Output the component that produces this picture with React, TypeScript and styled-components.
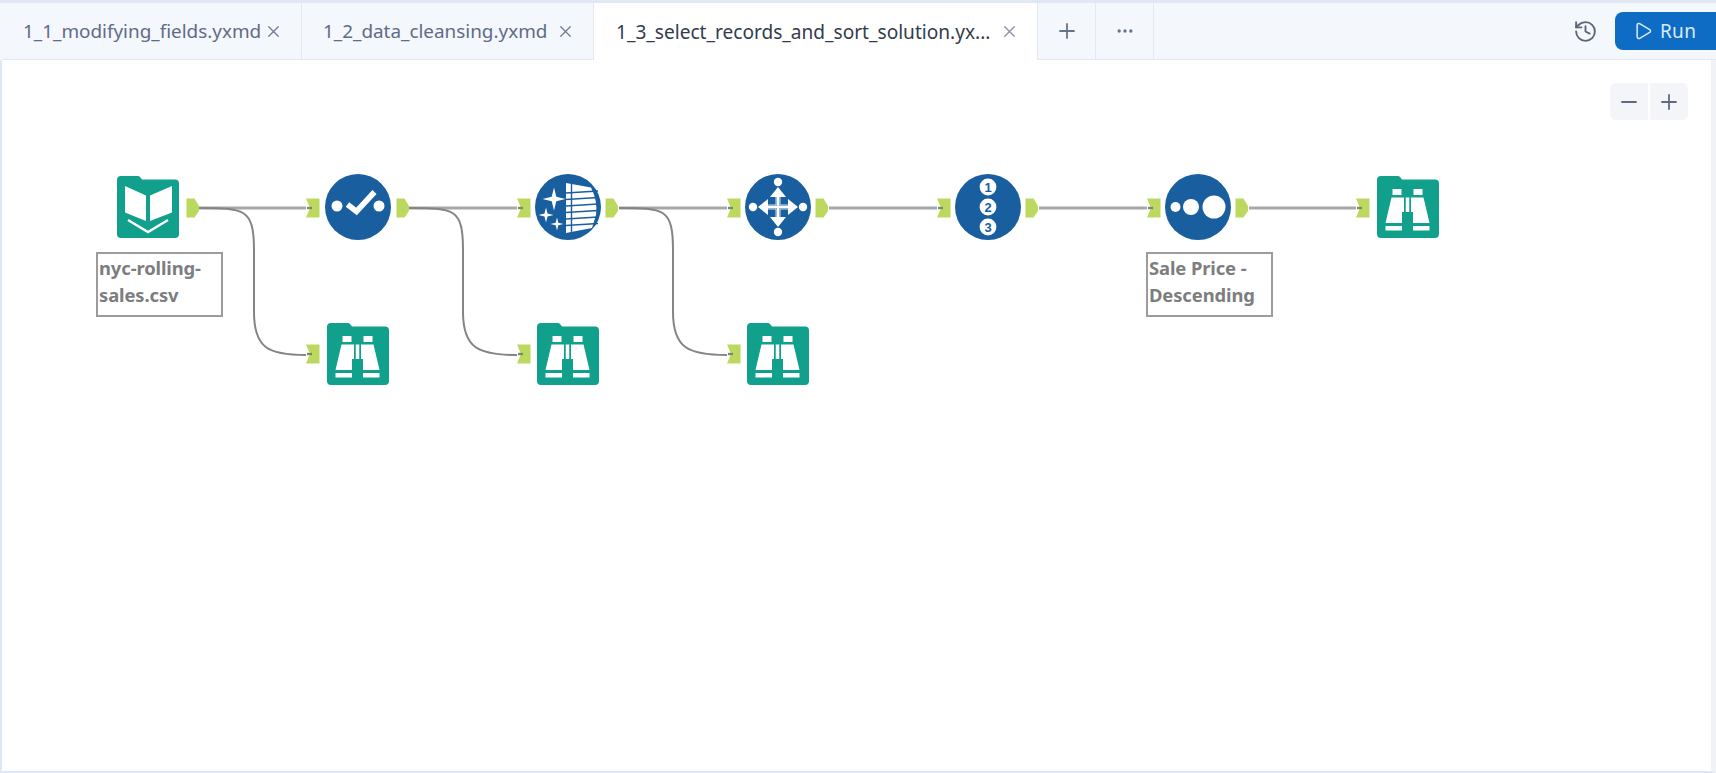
import React from "react";
import styled, { createGlobalStyle } from "styled-components";
import { History, Play, Plus, Minus, X, Ellipsis } from "lucide-react";

const Global = createGlobalStyle`
  html, body { margin: 0; padding: 0; background: #fff; overflow: hidden; }
  #root { height: 773px; }
`;

const Page = styled.div`
  width: 1716px;
  height: 773px;
  display: flex;
  flex-direction: column;
  box-sizing: border-box;
  border-top: 3px solid #e0e8f4;
  background: #fff;
  overflow: hidden;
  font-family: "Noto Sans", "Open Sans", sans-serif;
`;

const TabBar = styled.header`
  height: 57px;
  flex: none;
  display: flex;
  align-items: stretch;
  background: #f4f7fc;
  padding-left: 2px;
`;

const Tab = styled.div<{ $w: number; $active?: boolean }>`
  width: ${(p) => p.$w}px;
  flex: none;
  box-sizing: border-box;
  display: flex;
  align-items: center;
  justify-content: space-between;
  padding: 0 18px 0 ${(p) => (p.$active ? 22 : 21)}px;
  font-size: ${(p) => (p.$active ? 19.1 : 18.9)}px;
  white-space: nowrap;
  color: ${(p) => (p.$active ? "#333c4c" : "#5f6c86")};
  background: ${(p) => (p.$active ? "#fff" : "transparent")};
  border-right: 1px solid #e3e9f3;
  border-bottom: ${(p) => (p.$active ? "none" : "1px solid #e3e9f3")};
  svg { flex: none; color: ${(p) => (p.$active ? "#8a97ad" : "#6f7e99")}; }
`;

const IconTab = styled.div`
  width: 58px;
  flex: none;
  box-sizing: border-box;
  display: flex;
  align-items: center;
  justify-content: center;
  color: #66738c;
  border-right: 1px solid #e3e9f3;
  border-bottom: 1px solid #e3e9f3;
`;

const BarRest = styled.div`
  flex: 1;
  display: flex;
  align-items: center;
  justify-content: flex-end;
  border-bottom: 1px solid #e3e9f3;
  gap: 17px;
  color: #5b6677;
`;

const RunButton = styled.div`
  width: 101px;
  height: 38px;
  margin-top: -1px;
  box-sizing: border-box;
  border-radius: 8px 0 0 8px;
  background: #0f6cc4;
  color: #dcebfa;
  display: flex;
  align-items: center;
  gap: 7px;
  padding-left: 18px;
  font-size: 19px;
  letter-spacing: 0.3px;
`;

const Canvas = styled.main`
  flex: 1;
  position: relative;
  box-sizing: border-box;
  background: #fff;
  border-left: 2px solid #dde7f5;
  border-right: 5px solid #f1f2f5;
  border-bottom: 2px solid #dde7f5;
`;

const ZoomBox = styled.div`
  position: absolute;
  top: 23px;
  left: 1608px;
  display: flex;
  gap: 2px;
`;

const ZoomCell = styled.div<{ $side: "l" | "r" }>`
  width: 38px;
  height: 37px;
  background: #f4f5f9;
  color: #5d6a80;
  display: flex;
  align-items: center;
  justify-content: center;
  border-radius: ${(p) => (p.$side === "l" ? "6px 0 0 6px" : "0 6px 6px 0")};
`;

const Wires = styled.svg`
  position: absolute;
  left: -2px;
  top: -60px;
  width: 1716px;
  height: 773px;
  pointer-events: none;
`;

const Tool = styled.svg<{ $x: number; $y: number; $s: number }>`
  position: absolute;
  left: ${(p) => p.$x - 2}px;
  top: ${(p) => p.$y - 60}px;
  width: ${(p) => p.$s}px;
  height: ${(p) => p.$s}px;
`;

const Note = styled.div<{ $x: number; $y: number }>`
  position: absolute;
  left: ${(p) => p.$x - 2}px;
  top: ${(p) => p.$y - 60}px;
  width: 127px;
  height: 65px;
  box-sizing: border-box;
  border: 2px solid #9c9c9c;
  background: #fff;
  padding: 1px 0 0 1px;
  font-family: "Noto Sans", "Open Sans", sans-serif;
  font-weight: 700;
  font-size: 18.4px;
  letter-spacing: -0.1px;
  line-height: 26.5px;
  white-space: nowrap;
  color: #7d7d80;
`;

const TEAL = "#10a08c";
const BLUE = "#195e9f";
const GREEN = "#bcd85e";

const Folder = () => (
  <path
    d="M4 0H21a3 3 0 0 1 2 1l2 2.500H58a4 4 0 0 1 4 4V58a4 4 0 0 1-4 4H4a4 4 0 0 1-4-4V4a4 4 0 0 1 4-4Z"
    fill={TEAL}
  />
);

const BookTool = ({ x, y }: { x: number; y: number }) => (
  <Tool $x={x} $y={y} $s={62} viewBox="0 0 62 62">
    <Folder />
    <path d="M8 10L29 19.500V45L8 36.500Z M33 19.500L55 10V36.500L33 45Z" fill="#fff" />
    <path d="M11 44L31 56L51 44" fill="none" stroke="#fff" strokeWidth="2.400" />
  </Tool>
);

const BrowseTool = ({ x, y }: { x: number; y: number }) => (
  <Tool $x={x} $y={y} $s={62} viewBox="0 0 62 62">
    <Folder />
    <g fill="#fff">
      <rect x="15.500" y="13" width="9" height="6" />
      <rect x="36.500" y="13" width="9" height="6" />
      <path d="M14.500 21.500H27V47H8.500Z" />
      <path d="M34 21.500H46.500L52.500 47H34Z" />
      <rect x="8.500" y="50" width="17.500" height="4.500" />
      <rect x="35" y="50" width="17.500" height="4.500" />
      <rect x="28.500" y="21.500" width="4" height="15" />
    </g>
    <rect x="25" y="36" width="11" height="26" fill={TEAL} />
    <rect x="27" y="21.500" width="1.500" height="16" fill={TEAL} />
    <rect x="32.500" y="21.500" width="1.500" height="16" fill={TEAL} />
  </Tool>
);

const Disc = ({ x, y, children }: { x: number; y: number; children: React.ReactNode }) => (
  <Tool $x={x - 0.5} $y={y} $s={66} viewBox="-33 -33 66 66">
    <circle r="33" fill={BLUE} />
    {children}
  </Tool>
);

const sparkle = (cx: number, cy: number, r: number) =>
  `M${cx} ${cy - r}L${cx + r * 0.2} ${cy - r * 0.2}L${cx + r} ${cy}L${cx + r * 0.2} ${cy + r * 0.2}L${cx} ${cy + r}L${cx - r * 0.2} ${cy + r * 0.2}L${cx - r} ${cy}L${cx - r * 0.2} ${cy - r * 0.2}Z`;

const numbers = [
  { n: "1", y: -20 },
  { n: "2", y: 0 },
  { n: "3", y: 20 },
];

const tableRows = [-15, -8.5, -2, 4.500, 11, 17.500];

const inputs = [
  [306, 198.500],
  [517, 198.500],
  [727, 198.500],
  [937, 198.500],
  [1147, 198.500],
  [1356, 198.500],
  [306, 344.500],
  [517, 344.500],
  [727, 344.500],
];
const outputs = [186.5, 396.5, 605.5, 815.5, 1025.5, 1235.5];

export default function App() {
  return (
    <>
      <Global />
      <Page>
        <TabBar>
          <Tab $w={300}>
            1_1_modifying_fields.yxmd
            <X size={19} strokeWidth={1.7} />
          </Tab>
          <Tab $w={292}>
            1_2_data_cleansing.yxmd
            <X size={19} strokeWidth={1.7} />
          </Tab>
          <Tab $w={444} $active>
            1_3_select_records_and_sort_solution.yx...
            <X size={19} strokeWidth={1.7} />
          </Tab>
          <IconTab>
            <Plus size={24} strokeWidth={1.8} />
          </IconTab>
          <IconTab>
            <Ellipsis size={20} strokeWidth={2} />
          </IconTab>
          <BarRest>
            <History size={25} strokeWidth={1.8} />
            <RunButton>
              <Play size={20} strokeWidth={1.8} />
              Run
            </RunButton>
          </BarRest>
        </TabBar>
        <Canvas>
          <ZoomBox>
            <ZoomCell $side="l">
              <Minus size={24} strokeWidth={1.8} />
            </ZoomCell>
            <ZoomCell $side="r">
              <Plus size={24} strokeWidth={1.8} />
            </ZoomCell>
          </ZoomBox>

          <Wires viewBox="0 0 1716 773">
            <g fill="none" stroke="#a8a8a8" strokeWidth="3">
              <path d="M199 208H306" />
              <path d="M409 208H517" />
              <path d="M619 208H727" />
              <path d="M829 208H937" />
              <path d="M1039 208H1147" />
              <path d="M1249 208H1356" />
            </g>
            <g fill="none" stroke="#848484" strokeWidth="2">
              <path d="M199 208C244 208 254 208 254 250V312C254 348 268 355 306 355" />
              <path d="M409 208C454 208 463 208 463 250V312C463 348 478 355 517 355" />
              <path d="M619 208C664 208 673 208 673 250V312C673 348 688 355 727 355" />
            </g>
            {outputs.map((x) => (
              <path key={x} d={`M${x} 198.500H${x + 8}L${x + 12.500} 206V211L${x + 8} 217.500H${x}Z`} fill={GREEN} />
            ))}
            {inputs.map(([x, y]) => (
              <g key={`${x}-${y}`}>
                <path d={`M${x} ${y}H${x + 13.500}V${y + 19}H${x}L${x + 4} ${y + 9.500}Z`} fill={GREEN} />
                <path d={`M${x + 1} ${y + 9.500}H${x + 6}`} stroke="#7d8a68" strokeWidth="2.400" />
              </g>
            ))}
          </Wires>

          <BookTool x={117} y={176} />
          <Note $x={96} $y={252}>
            nyc-rolling-
            <br />
            sales.csv
          </Note>

          <Disc x={325} y={174}>
            <circle cx="-21" cy="-1" r="5.500" fill="#fff" />
            <circle cx="21" cy="-1" r="5.500" fill="#fff" />
            <path d="M-10.500 -2.500L-1.500 4.500L16.500 -15" fill="none" stroke="#fff" strokeWidth="5.600" />
          </Disc>

          <Disc x={535} y={174}>
            <path d="M-2 -24L23 -19.500Q30 -6 28 8L24 21L-2 26Z" fill="#fff" />
            <g stroke={BLUE} strokeWidth="1.400">
              {tableRows.map((r) => (
                <path key={r} d={`M-2 ${r + 1}L30 ${r - 1}`} />
              ))}
              <path d="M3.500 -24V26" />
            </g>
            <path d={sparkle(-14, -8, 11.500)} fill="#fff" />
            <path d={sparkle(-22, 8, 7.500)} fill="#fff" />
            <path d={sparkle(-11, 17, 6.500)} fill="#fff" />
          </Disc>

          <Disc x={745} y={174}>
            <g fill="#fff">
              <circle cy="-25" r="4.200" />
              <circle cy="25" r="4.200" />
              <circle cx="-25" r="4.200" />
              <circle cx="25" r="4.200" />
              <path d="M0 -20L8 -10H-8Z" />
              <path d="M0 20L8 10H-8Z" />
              <path d="M-20 0L-10 -8V8Z" />
              <path d="M20 0L10 -8V8Z" />
            </g>
            <path d="M-13 0H13M0 -13V13" stroke="#fff" strokeWidth="2.600" />
            <path d="M-2 -13V-2H-13M2 -13V-2H13M-2 13V2H-13M2 13V2H13" fill="none" stroke="#fff" strokeWidth="0.800" />
          </Disc>

          <Disc x={955} y={174}>
            {numbers.map((d) => (
              <g key={d.n}>
                <circle cy={d.y} r="8.400" fill="#fff" />
                <text
                  y={d.y + 4.500}
                  textAnchor="middle"
                  fontFamily="'Liberation Sans', sans-serif"
                  fontWeight="700"
                  fontSize="13"
                  fill={BLUE}
                >
                  {d.n}
                </text>
              </g>
            ))}
          </Disc>

          <Disc x={1165} y={174}>
            <circle cx="-22.500" r="5" fill="#fff" />
            <circle cx="-7" r="8" fill="#fff" />
            <circle cx="16" r="11.500" fill="#fff" />
          </Disc>
          <Note $x={1146} $y={252}>
            Sale Price -
            <br />
            Descending
          </Note>

          <BrowseTool x={1377} y={176} />
          <BrowseTool x={327} y={323} />
          <BrowseTool x={537} y={323} />
          <BrowseTool x={747} y={323} />
        </Canvas>
      </Page>
    </>
  );
}
